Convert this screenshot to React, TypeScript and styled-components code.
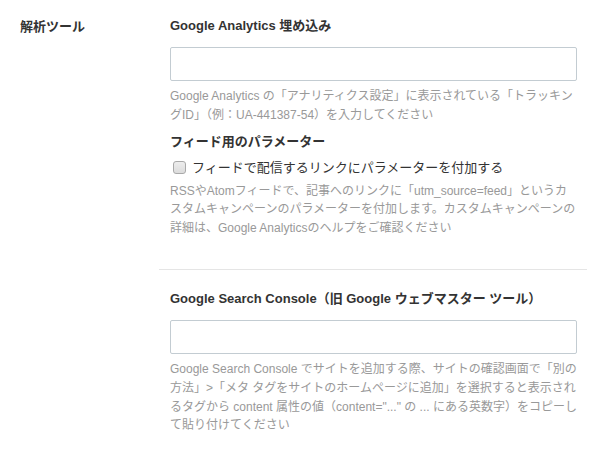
import styled, { createGlobalStyle } from 'styled-components'

const GlobalStyle = createGlobalStyle`
  html, body {
    margin: 0;
    padding: 0;
    background: #fff;
  }
  body {
    font-family: "Liberation Sans", Arial, "Noto Sans CJK JP", sans-serif;
    color: #333;
  }
`

const Page = styled.div`
  display: grid;
  grid-template-columns: 139px 428px;
  padding: 16px 0 0 20px;
`

const GroupLabel = styled.h2`
  margin: 1px 0 0;
  font-size: 13px;
  line-height: 20px;
  font-weight: 700;
  color: #333;
`

const Sections = styled.div`
  display: flex;
  flex-direction: column;
`

interface SectionProps {
  $divided?: boolean
}

const Section = styled.section<SectionProps>`
  padding: ${({ $divided }) => ($divided ? '19px 10px 0 11px' : '0 10px 31px 11px')};
  border-top: ${({ $divided }) => ($divided ? '1px solid #e5e5e5' : 'none')};
`

const Heading = styled.h3`
  margin: 0;
  font-size: 13px;
  line-height: 20px;
  font-weight: 700;
  color: #333;
`

const SubHeading = styled(Heading)`
  margin-top: 7px;
`

const TextInput = styled.input`
  display: block;
  box-sizing: border-box;
  width: 100%;
  height: 34px;
  margin: 11px 0 6px;
  padding: 4px 8px;
  border: 1px solid #c3ccd2;
  border-radius: 2px;
  background: #fff;
  font: inherit;
  font-size: 13px;
  outline: none;
`

const Help = styled.p`
  margin: 0;
  font-size: 12px;
  line-height: 18.8px;
  color: #999;
`

const CheckRow = styled.label`
  display: flex;
  align-items: center;
  gap: 6px;
  margin: 5px 0 4px 3px;
  font-size: 13px;
  line-height: 21px;
  color: #333;
  cursor: pointer;
`

const Check = styled.input`
  appearance: none;
  margin: 0;
  width: 13px;
  height: 13px;
  border: 1px solid #a9a9a9;
  border-radius: 3px;
  background: linear-gradient(#ededed, #dcdcdc);
  box-sizing: border-box;
`

export default function App() {
  return (
    <>
      <GlobalStyle />
      <Page>
        <GroupLabel>解析ツール</GroupLabel>
        <Sections>
          <Section>
            <Heading>Google Analytics 埋め込み</Heading>
            <TextInput type="text" />
            <Help>
              Google Analytics の「アナリティクス設定」に表示されている「トラッキングID」（例：UA-441387-54）を入力してください
            </Help>
            <SubHeading>フィード用のパラメーター</SubHeading>
            <CheckRow>
              <Check type="checkbox" />
              フィードで配信するリンクにパラメーターを付加する
            </CheckRow>
            <Help>
              RSSやAtomフィードで、記事へのリンクに「utm_source=feed」というカスタムキャンペーンのパラメーターを付加します。カスタムキャンペーンの詳細は、Google Analyticsのヘルプをご確認ください
            </Help>
          </Section>
          <Section $divided>
            <Heading>Google Search Console（旧 Google ウェブマスター ツール）</Heading>
            <TextInput type="text" />
            <Help>
              Google Search Console でサイトを追加する際、サイトの確認画面で「別の方法」&gt;「メタ タグをサイトのホームページに追加」を選択すると表示されるタグから content 属性の値（content="..." の ... にある英数字）をコピーして貼り付けてください
            </Help>
          </Section>
        </Sections>
      </Page>
    </>
  )
}
